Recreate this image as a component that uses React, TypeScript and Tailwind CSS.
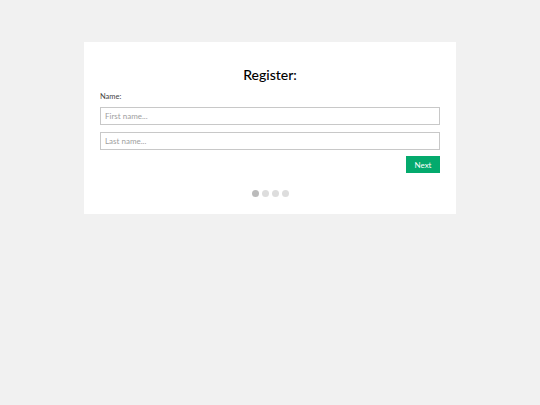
export default function App() {
  return (
    <div className="min-h-[405px] w-full bg-[#f1f1f1] pt-[42px]" style={{ fontFamily: "Lato, 'Open Sans', sans-serif" }}>
      <div className="mx-auto w-[372px] bg-white px-4 pt-[25px] pb-[17px]">
        <h1 className="text-center text-[14px] font-medium leading-[16px] text-black">Register:</h1>
        <div className="mt-[9px] text-[7.5px] leading-[10px] text-[#444]">Name:</div>
        <input
          placeholder="First name..."
          className="mt-[5px] block h-[18px] w-full border border-[#c8c8c8] px-[4px] text-[8px] placeholder:text-[#a0a0a0] outline-none"
        />
        <input
          placeholder="Last name..."
          className="mt-[7px] block h-[18px] w-full border border-[#c8c8c8] px-[4px] text-[8px] placeholder:text-[#a0a0a0] outline-none"
        />
        <div className="mt-[6px] flex justify-end">
          <button className="h-[17px] w-[34px] bg-[#04AA6D] text-[8px] text-white">Next</button>
        </div>
        <div className="mt-[17px] flex justify-center gap-[3px]">
          <span className="h-[7px] w-[7px] rounded-full bg-[#bbbbbb]" />
          <span className="h-[7px] w-[7px] rounded-full bg-[#dddddd]" />
          <span className="h-[7px] w-[7px] rounded-full bg-[#dddddd]" />
          <span className="h-[7px] w-[7px] rounded-full bg-[#dddddd]" />
        </div>
      </div>
    </div>
  );
}
